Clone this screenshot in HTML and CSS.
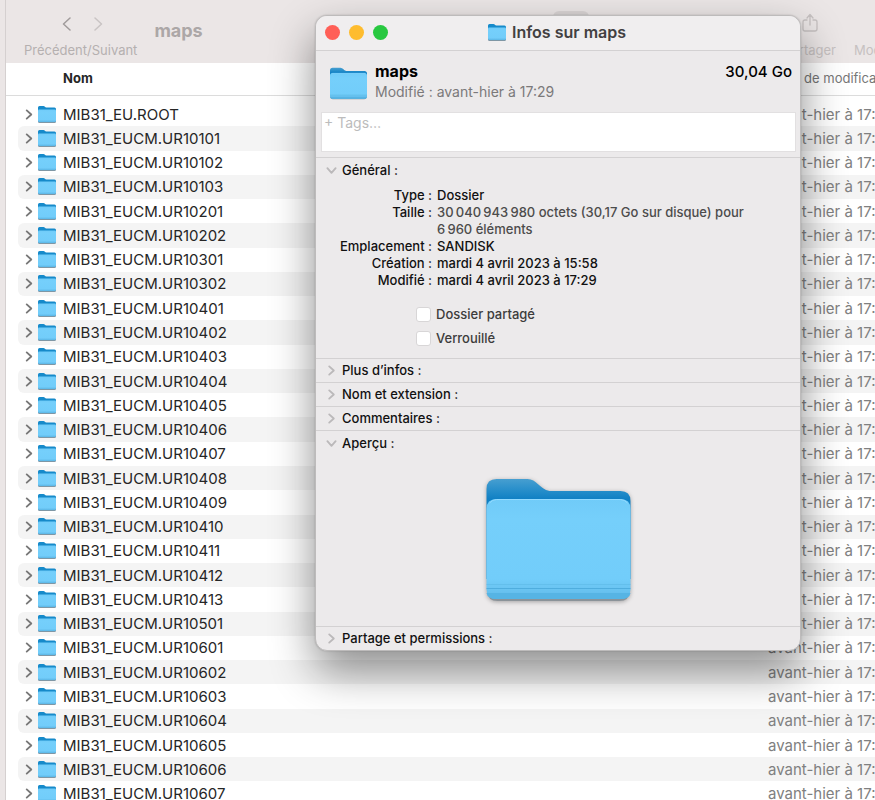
FILE: index.html
```html
<!DOCTYPE html>
<html lang="fr">
<head>
<meta charset="utf-8">
<title>maps</title>
<link rel="stylesheet" href="styles.css">
</head>
<body>
<svg class="defs" aria-hidden="true">
  <defs>
    <linearGradient id="back" x1="0" y1="0" x2="0" y2="1">
      <stop offset="0" stop-color="#479fd0"/>
      <stop offset="0.1" stop-color="#2a90cb"/>
      <stop offset="0.2" stop-color="#1080c4"/>
      <stop offset="1" stop-color="#1080c4"/>
    </linearGradient>
    <linearGradient id="front" x1="0" y1="0" x2="0" y2="1">
      <stop offset="0" stop-color="#70cbf8"/>
      <stop offset="0.2" stop-color="#75cffb"/>
      <stop offset="0.8" stop-color="#72cdfa"/>
      <stop offset="0.93" stop-color="#67c1ef"/>
      <stop offset="1" stop-color="#56b3e4"/>
    </linearGradient>
  </defs>
  <symbol id="folder" viewBox="0 0 144 122">
    <path fill="#8b9399" d="M1 20H143V112Q143 122 133 122H11Q1 122 1 112Z"/>
    <path fill="url(#back)" d="M0 10Q0 0 10 0H41C50 0 53 10 63 12H134Q144 12 144 22V100H0Z"/>
    <path fill="url(#front)" d="M0 30Q0 20 10 20H134Q144 20 144 30V110Q144 120 134 120H10Q0 120 0 110Z"/>
    <path fill="none" stroke="#93daff" d="M3 24Q6 20.500 10 20.500H134Q138 20.500 141 24"/>
    <path fill="none" stroke="#5fbae8" stroke-opacity="0.7" d="M0 105.500H144"/>
    <path fill="none" stroke="#4fadde" d="M0 109.500H144"/>
    <path fill="#56b4e4" d="M0 114H144Q143 120 134 120H10Q1 120 0 114Z"/>
  </symbol>
  <symbol id="folder-small" viewBox="0 0 18 17">
    <path fill="#7f97a5" d="M0 6H18V15.500Q18 17 16.500 17H1.500Q0 17 0 15.500Z"/>
    <path fill="#168aca" d="M0 1.500Q0 0 1.500 0H5.500C6.800 0 7 1.300 8.300 1.500H16.500Q18 1.500 18 3V8H0Z"/>
    <path fill="url(#front)" d="M0 4.500Q0 3.500 1 3.500H17Q18 3.500 18 4.500V15Q18 16 16.500 16H1.500Q0 16 0 15Z"/>
  </symbol>
  <symbol id="chevron" viewBox="0 0 8 12">
    <path fill="none" stroke="currentColor" stroke-width="2" stroke-linecap="round" stroke-linejoin="round" d="M1.500 1.500L6.500 6L1.500 10.500"/>
  </symbol>
</svg>

<main class="finder">
  <header class="toolbar">
    <div class="nav">
      <div class="nav-buttons">
        <button type="button" aria-label="Précédent"><svg viewBox="0 0 10 14"><path d="M8 1L1.500 7L8 13"/></svg></button>
        <button type="button" class="dim" aria-label="Suivant"><svg viewBox="0 0 10 14"><path d="M2 1L8.500 7L2 13"/></svg></button>
      </div>
      <span class="tool-label">Précédent/Suivant</span>
    </div>
    <h1>maps</h1>
    <div class="view-switch"><span class="view-active"></span></div>
    <button type="button" class="tool">
      <svg viewBox="0 0 16 20"><path d="M5 7H3Q1 7 1 9V16Q1 18 3 18H13Q15 18 15 16V9Q15 7 13 7H11M8 12V2M5 5L8 1.500L11 5"/></svg>
      <span>Partager</span>
    </button>
    <button type="button" class="tool tool-tags"><span>Modifier les tags</span></button>
  </header>
  <table class="files">
    <thead><tr><th>Nom</th><th class="date">Date de modification</th></tr></thead>
    <tbody id="rows"></tbody>
  </table>
</main>

<section class="info" aria-label="Infos sur maps">
  <header class="titlebar">
    <div class="lights">
      <button type="button" class="red" aria-label="Fermer"></button>
      <button type="button" class="yellow" aria-label="Réduire"></button>
      <button type="button" class="green" aria-label="Agrandir"></button>
    </div>
    <h2><svg class="folder-icon"><use href="#folder-small"/></svg>Infos sur maps</h2>
  </header>
  <div class="summary">
    <svg class="summary-icon"><use href="#folder"/></svg>
    <div class="summary-text">
      <strong>maps</strong>
      <span>Modifié : avant-hier à 17:29</span>
    </div>
    <span class="size">30,04 Go</span>
  </div>
  <textarea class="tags" aria-label="Tags" placeholder="+ Tags…"></textarea>

  <details open>
    <summary><svg><use href="#chevron"/></svg>Général :</summary>
    <dl>
      <dt>Type :</dt><dd>Dossier</dd>
      <dt>Taille :</dt><dd class="soft">30&#8239;040&#8239;943&#8239;980 octets (30,17 Go sur disque) pour 6&#8239;960 éléments</dd>
      <dt>Emplacement :</dt><dd>SANDISK</dd>
      <dt>Création :</dt><dd>mardi 4 avril 2023 à 15:58</dd>
      <dt>Modifié :</dt><dd>mardi 4 avril 2023 à 17:29</dd>
    </dl>
    <div class="checks">
      <label><input type="checkbox">Dossier partagé</label>
      <label><input type="checkbox">Verrouillé</label>
    </div>
  </details>
  <details><summary><svg><use href="#chevron"/></svg>Plus d’infos :</summary></details>
  <details><summary><svg><use href="#chevron"/></svg>Nom et extension :</summary></details>
  <details><summary><svg><use href="#chevron"/></svg>Commentaires :</summary></details>
  <details open>
    <summary><svg><use href="#chevron"/></svg>Aperçu :</summary>
    <div class="preview"><svg><use href="#folder"/></svg></div>
  </details>
  <details><summary><svg><use href="#chevron"/></svg>Partage et permissions :</summary></details>
</section>
<script src="script.js"></script>
</body>
</html>
```
FILE: styles.css
```css
* {
  box-sizing: border-box;
}

body {
  margin: 0;
  min-height: 100vh;
  overflow: hidden;
  background: #ebe6e6;
  font-family: Inter, "Liberation Sans", sans-serif;
  font-size: 15px;
  color: #262626;
}

button {
  padding: 0;
  border: 0;
  background: none;
  font: inherit;
  color: inherit;
}

.defs {
  position: absolute;
  width: 0;
  height: 0;
}

.finder {
  height: 100vh;
  margin-left: 5px;
  border-left: 1px solid #d5d0d0;
  overflow: hidden;
  background: #fff;
}

/* Toolbar */

.toolbar {
  display: flex;
  height: 63px;
  padding-left: 18px;
  background: #ebe6e6;
  color: #b5b0b0;
  font-size: 13px;
  white-space: nowrap;
}

.toolbar svg {
  display: block;
  fill: none;
  stroke: currentColor;
  stroke-linecap: round;
  stroke-linejoin: round;
}

.nav {
  display: flex;
  flex-direction: column;
  align-items: center;
  gap: 10px;
  padding-top: 17px;
}

.nav-buttons {
  display: flex;
  gap: 21px;
  padding-left: 4px;
  color: #a09b9b;
}

.nav-buttons svg {
  width: 10px;
  height: 14px;
  stroke-width: 1.5;
}

.nav-buttons .dim {
  color: #c9c4c4;
}

.nav span {
  line-height: 18px;
}

.toolbar h1 {
  margin: 18px 0 0 17px;
  font-size: 18px;
  line-height: 26px;
  font-weight: 700;
  color: #aca7a7;
}

.view-switch {
  flex: 1;
  display: flex;
  justify-content: center;
  padding: 11px 0 0 156px;
}

.view-active {
  width: 36px;
  height: 28px;
  border-radius: 6px;
  background: #dad5d5;
}

.tool {
  display: flex;
  flex-direction: column;
  align-items: center;
  justify-content: flex-end;
  gap: 8px;
  height: 59px;
  color: #c6c1c1;
}

.tool svg {
  width: 16px;
  height: 20px;
  stroke-width: 1.3;
}

.tool span {
  line-height: 18px;
}

.tool-tags {
  width: 21px;
  margin-left: 18px;
  align-items: flex-start;
}

/* File list */

.files {
  width: 100%;
  table-layout: fixed;
  border-spacing: 0;
  white-space: nowrap;
}

.files th {
  height: 33px;
  padding: 0 0 3px 57px;
  border-bottom: 1px solid #dcdcdc;
  font-size: 13px;
  font-weight: 700;
  text-align: left;
}

.files th.date {
  width: 107px;
  padding-left: 4px;
  font-weight: 400;
  color: #777;
}

.files thead::after {
  content: "";
  display: block;
  height: 6px;
}

.files tbody {
  height: 704px;
}

.files td {
  padding: 0;
}

.files td:first-child {
  border-left: 12px solid transparent;
  border-radius: 18px 0 0 18px / 6px 0 0 6px;
  background-clip: padding-box;
}

.files tr:nth-child(even) td {
  background-color: #f4f4f4;
}

.files td.date {
  color: #808080;
}

.name {
  display: flex;
  align-items: center;
  padding-left: 7px;
}

.name button {
  width: 13px;
  color: #777;
}

.name button svg {
  display: block;
  width: 8px;
  height: 11px;
}

.folder-icon {
  width: 18px;
  height: 17px;
}

.name .folder-icon {
  margin-right: 7px;
}

/* Info window */

.info {
  position: absolute;
  top: 15px;
  left: 315px;
  width: 486px;
  border: 1px solid #bdbbbb;
  border-radius: 12px;
  overflow: hidden;
  background: #eceaeb;
  box-shadow: 0 20px 44px rgba(0, 0, 0, 0.45), 0 0 2px rgba(0, 0, 0, 0.2);
  font-size: 13px;
  line-height: 17px;
  color: #111;
}

.titlebar {
  display: flex;
  align-items: center;
  height: 35px;
  padding: 0 174px 1px 9px;
  border-bottom: 1px solid #d3d1d2;
  background: #f0eeef;
}

.lights {
  display: flex;
  gap: 9px;
}

.lights button {
  width: 15px;
  height: 15px;
  border-radius: 50%;
}

.lights .red {
  background: #ff5f57;
}

.lights .yellow {
  background: #febc2e;
}

.lights .green {
  background: #28c840;
}

.info h2 {
  display: flex;
  align-items: center;
  gap: 6px;
  margin: 0 0 0 auto;
  font-size: 16px;
  font-weight: 600;
  color: #424041;
  white-space: nowrap;
}

.summary {
  display: flex;
  align-items: flex-start;
  gap: 8px;
  height: 61px;
  padding: 9px 8px 0 14px;
}

.summary-icon {
  width: 37px;
  height: 33px;
  margin-top: 7px;
}

.summary-text {
  flex: 1;
  display: flex;
  flex-direction: column;
  color: #7b797a;
}

.summary strong,
.size {
  font-size: 16px;
  line-height: 22px;
  color: #000;
}

.summary strong {
  font-weight: 700;
}

.summary .size {
  font-size: 15px;
  font-weight: 500;
  line-height: 23px;
}

.summary-text span {
  font-size: 14px;
  line-height: 20px;
}

.tags {
  display: block;
  width: calc(100% - 9px);
  height: 40px;
  margin: 0 4px 5px 5px;
  padding: 1px 2px;
  border: 1px solid #e2e0e1;
  outline: 0;
  resize: none;
  background: #fff;
  font: inherit;
  font-size: 14px;
}

.tags::placeholder {
  color: #bcbcbc;
}

details {
  border-top: 1px solid #d3d1d2;
}

.info summary {
  display: flex;
  align-items: center;
  gap: 6px;
  height: 25px;
  padding-left: 11px;
  list-style: none;
  font-weight: 500;
}

.info details:not([open]) summary {
  height: 23px;
}

.info summary svg {
  width: 9px;
  height: 11px;
  color: #bbb9ba;
}

.info details[open] > summary svg {
  transform: rotate(90deg);
}

dl {
  display: grid;
  grid-template-columns: 116px 1fr;
  column-gap: 5px;
  margin: 4px 40px 0 0;
  font-weight: 500;
}

dt,
dd {
  margin: 0;
}

dt {
  text-align: right;
}

dd.soft {
  color: #4c4c4c;
}

.checks {
  display: grid;
  gap: 7px;
  padding: 17px 0 11px 100px;
  font-weight: 500;
  color: #3c3c3c;
}

.checks label {
  display: flex;
  align-items: center;
  gap: 5px;
}

.checks input {
  appearance: none;
  width: 15px;
  height: 15px;
  margin: 0;
  border: 1px solid #d8d6d7;
  border-radius: 3px;
  background: #fff;
}

.preview {
  display: flex;
  justify-content: center;
  padding: 23px 0 25px;
}

.preview svg {
  width: 145px;
  height: 122px;
  filter: drop-shadow(0 1px 2px rgba(0, 0, 0, 0.3));
}
```
FILE: script.js
```js
const names = [
  "EU.ROOT",
  ...[
    10101, 10102, 10103, 10201, 10202, 10301, 10302, 10401, 10402, 10403,
    10404, 10405, 10406, 10407, 10408, 10409, 10410, 10411, 10412, 10413,
    10501, 10601, 10602, 10603, 10604, 10605, 10606, 10607,
  ].map((n) => `EUCM.UR${n}`),
];

document.getElementById("rows").innerHTML = names
  .map(
    (name) => `<tr>
      <td><div class="name">
        <button type="button" aria-label="Ouvrir MIB31_${name}"><svg><use href="#chevron"/></svg></button>
        <svg class="folder-icon"><use href="#folder-small"/></svg>
        <span>MIB31_${name}</span>
      </div></td>
      <td class="date">avant-hier à 17:29</td>
    </tr>`
  )
  .join("");
```
